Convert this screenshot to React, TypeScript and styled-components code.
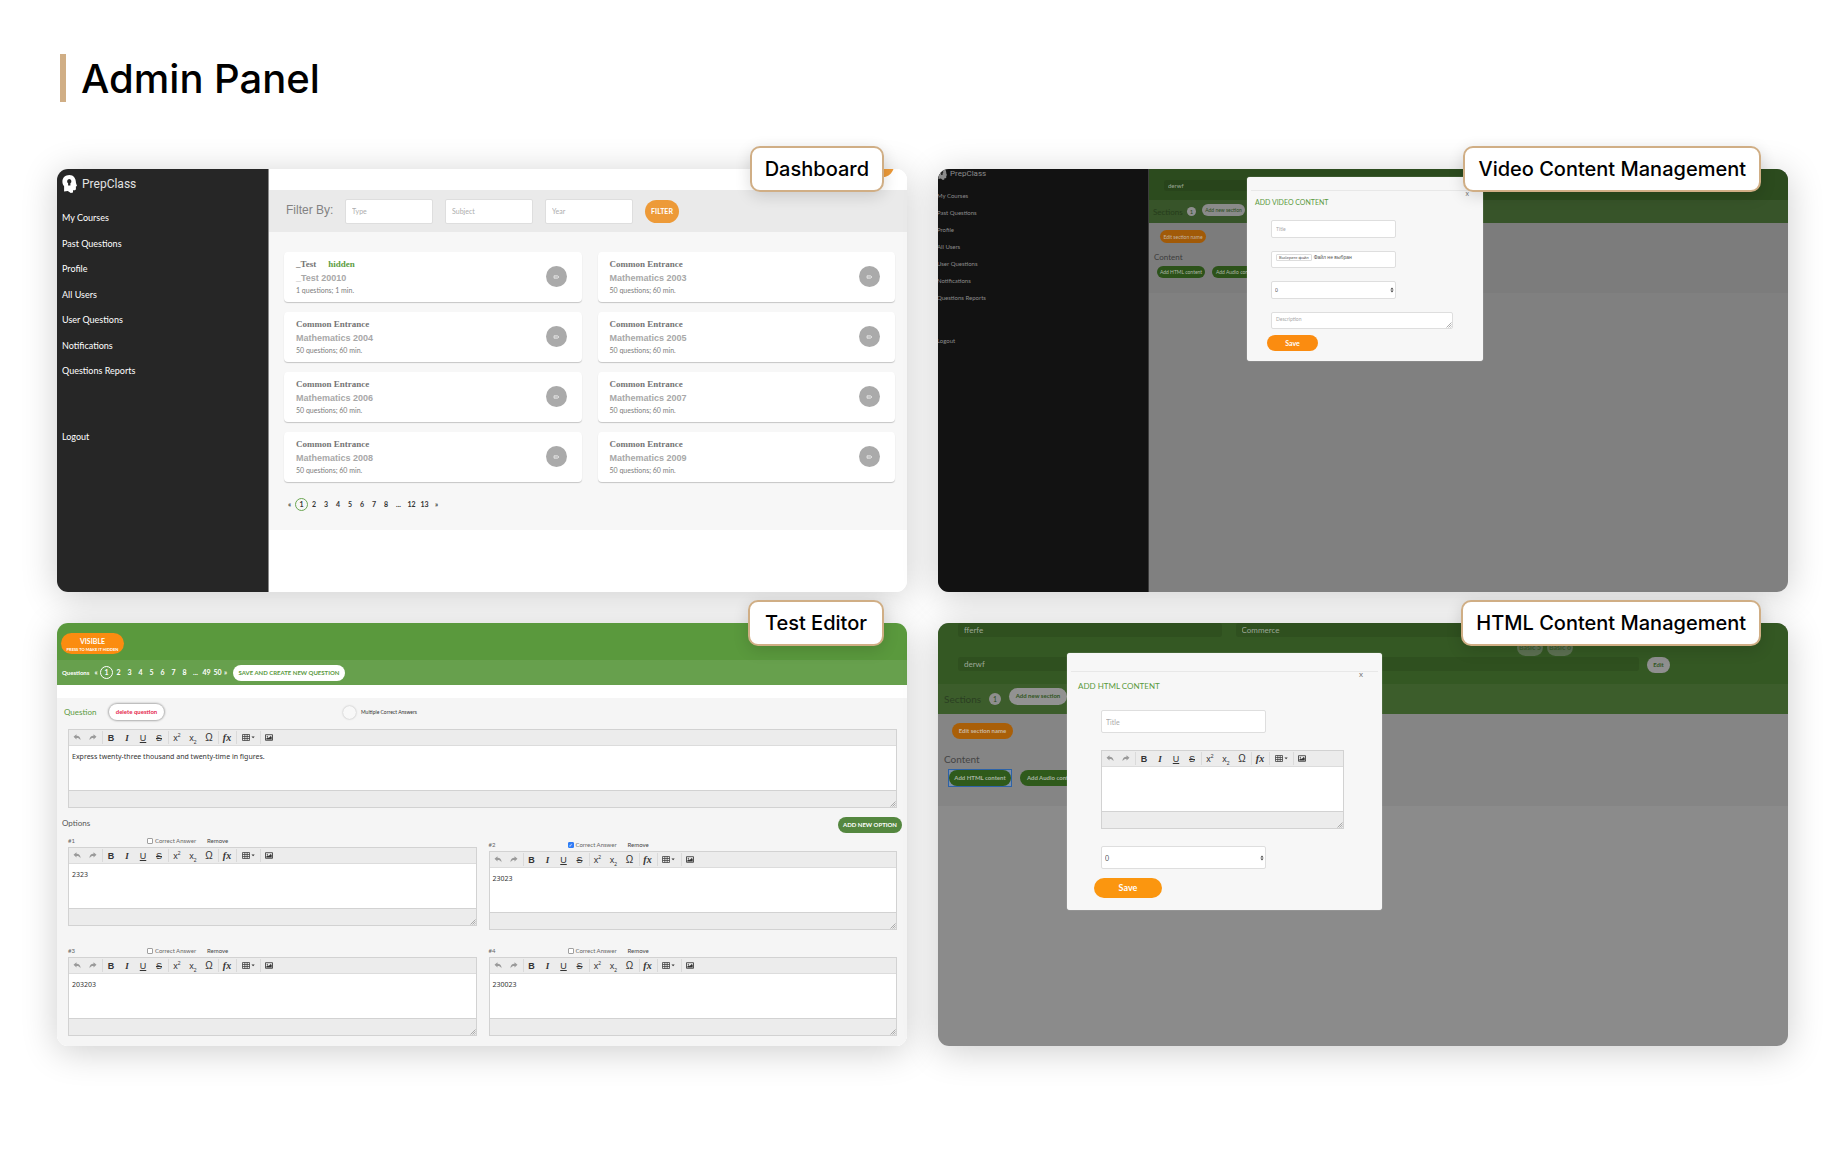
import React from "react";
import styled, { createGlobalStyle, css } from "styled-components";

const GlobalStyle = createGlobalStyle`
  *, *::before, *::after { box-sizing: border-box; }
  body { margin: 0; background: #fff; font-family: Inter, sans-serif; color: #000; }
  button, input, select, textarea { font-family: inherit; margin: 0; padding: 0; border: 0; border-radius: 0; }
  button { cursor: pointer; white-space: nowrap; }
  h1, h2, h3, p, ul { margin: 0; padding: 0; }
  ul { list-style: none; }
  a { color: inherit; text-decoration: none; }
`;

/* ---------- Page ---------- */

const Page = styled.main`
  padding: 54px 58px 113px 57px;
`;

const Title = styled.h1`
  height: 48px;
  margin: 0 0 67px 3px;
  padding-left: 15px;
  border-left: 6px solid #d0ae85;
  font-size: 40px;
  font-weight: 500;
  line-height: 50px;
`;

const Gallery = styled.div`
  display: grid;
  grid-template-columns: repeat(2, minmax(0, 1fr));
  gap: 31px;
`;

const Shot = styled.section`
  position: relative;
  display: flex;
  min-height: 423px;
  border-radius: 11px;
  box-shadow: 0 5px 36px rgba(0, 0, 0, 0.2);
`;

const Badge = styled.h2<{ $right: number; $pad: number }>`
  position: absolute;
  top: -23px;
  right: ${(p) => p.$right}px;
  padding: 9px ${(p) => p.$pad}px;
  border: 2px solid #d0ae85;
  border-radius: 10px;
  background: #fff;
  box-shadow: 0 4px 16px rgba(0, 0, 0, 0.14);
  font-size: 20px;
  font-weight: 500;
  line-height: 24px;
  white-space: nowrap;
`;

const Screen = styled.div<{ $bg: string; $column?: boolean }>`
  position: relative;
  display: flex;
  flex: 1;
  flex-direction: ${(p) => (p.$column ? "column" : "row")};
  min-width: 0;
  overflow: hidden;
  border-radius: 11px;
  background: ${(p) => p.$bg};
  font-family: Lato, sans-serif;
`;

const Column = styled.div`
  display: flex;
  flex: 1;
  flex-direction: column;
  min-width: 0;
`;

/* ---------- Sidebar ---------- */

const Side = styled.nav<{ $small?: boolean }>`
  display: flex;
  flex: none;
  flex-direction: column;
  width: 212px;
  padding: 5px 0 0 5px;
  background: #262626;
  color: #fff;
  border-right: 1px solid #8a8a8a;
  font-size: 9px;
  line-height: 12px;
  ${(p) =>
    p.$small &&
    css`
      width: 211px;
      padding: 0;
      background: #121212;
      color: #8c8c8c;
      border-right-color: #3c3c3c;
      font-size: 6px;
      line-height: 8px;
    `}
`;

const Logo = styled.div<{ $small?: boolean }>`
  display: flex;
  align-items: center;
  gap: ${(p) => (p.$small ? 3 : 5)}px;
  height: ${(p) => (p.$small ? 10 : 19)}px;
  margin-left: ${(p) => (p.$small ? -1 : 0)}px;
  font-family: Roboto, sans-serif;
  font-size: ${(p) => (p.$small ? 8 : 12)}px;
  font-weight: 400;
  color: ${(p) => (p.$small ? "#8c8c8c" : "#e2e2e2")};
  svg {
    width: ${(p) => (p.$small ? 10 : 15)}px;
    height: ${(p) => (p.$small ? 12 : 18)}px;
    color: ${(p) => (p.$small ? "#8c8c8c" : "#fff")};
  }
`;

const Menu = styled.ul<{ $small?: boolean }>`
  display: flex;
  flex-direction: column;
  justify-content: space-between;
  height: ${(p) => (p.$small ? 110 : 165)}px;
  margin: ${(p) => (p.$small ? "13px 0 35px -1px" : "19px 0 54px")};
`;

const Logout = styled.a<{ $small?: boolean }>`
  margin-left: ${(p) => (p.$small ? -1 : 0)}px;
`;

const HeadIcon = () => (
  <svg viewBox="0 0 15 18" aria-hidden="true">
    <path
      fill="currentColor"
      d="M7.400 0C3.300 0 .400 2.800.400 6.600c0 2 .700 3.500 1.700 4.700v5.200l3.700-.600 3 2.100 2.200-.600v-2.100h1.700c.800 0 1.200-.500 1.200-1.200v-2.500l1.100-.700-1-2.800C14 3.400 11.500 0 7.400 0z"
    />
    <path fill="#262626" d="M7.300 4a2.300 2.300 0 0 0-1.200 4.200v2.300h2.300V8.200A2.300 2.300 0 0 0 7.300 4z" />
  </svg>
);

const MENU = [
  "My Courses",
  "Past Questions",
  "Profile",
  "All Users",
  "User Questions",
  "Notifications",
  "Questions Reports",
];

const Sidebar = ({ small }: { small?: boolean }) => (
  <Side $small={small}>
    <Logo $small={small}>
      <HeadIcon />
      PrepClass
    </Logo>
    <Menu $small={small}>
      {MENU.map((m) => (
        <li key={m}>
          <a href="#">{m}</a>
        </li>
      ))}
    </Menu>
    <Logout href="#" $small={small}>
      Logout
    </Logout>
  </Side>
);

/* ---------- Shared controls ---------- */

const Pill = styled.button<{
  $bg: string;
  $fg?: string;
  $h?: number;
  $w: number;
  $size?: number;
  $light?: boolean;
}>`
  flex: none;
  width: ${(p) => p.$w}px;
  height: ${(p) => p.$h ?? 16}px;
  border-radius: 12px;
  background: ${(p) => p.$bg};
  color: ${(p) => p.$fg ?? "#fff"};
  font-size: ${(p) => p.$size ?? 6}px;
  font-weight: ${(p) => (p.$light ? 400 : 700)};
  line-height: 8px;
`;

type PagerLook = { $cell: number; $multi: number; $first: number; $last: number; $color: string; $ring: string };

const Pager = styled.ul<PagerLook>`
  display: flex;
  align-items: center;
  color: ${(p) => p.$color};
  font-size: 7px;
  font-weight: 700;
  line-height: 11px;
  text-align: center;
  li {
    width: ${(p) => p.$cell}px;
  }
  li:nth-child(n + 10) {
    width: ${(p) => p.$multi}px;
  }
  li:first-child {
    width: ${(p) => p.$first}px;
  }
  li:last-child {
    width: ${(p) => p.$last}px;
  }
  li[aria-current] {
    width: 13px;
    border: 1px solid ${(p) => p.$ring};
    border-radius: 50%;
  }
`;

const Pages = ({ items, ...look }: { items: string[] } & PagerLook) => (
  <Pager {...look}>
    {items.map((t) => (
      <li key={t} aria-current={t === "1" ? "page" : undefined}>
        {t}
      </li>
    ))}
  </Pager>
);

/* ---------- Dashboard ---------- */

const TopStrip = styled.header`
  display: flex;
  justify-content: flex-end;
  align-items: flex-end;
  height: 21px;
  padding: 0 13px 13px 0;
  background: #fff;
`;

const FilterBar = styled.form`
  display: flex;
  align-items: center;
  gap: 12px;
  height: 42px;
  padding: 0 17px;
  background: #eaeaea;
`;

const FilterLabel = styled.span`
  width: 47px;
  color: #828282;
  font-family: "Liberation Sans", sans-serif;
  font-size: 12px;
  line-height: 14px;
  padding-bottom: 3px;
  white-space: nowrap;
`;

const FilterInput = styled.input`
  width: 88px;
  height: 25px;
  padding: 0 6px;
  border: 1px solid #dedede;
  border-radius: 2px;
  background: #fff;
  font-size: 7px;
  &::placeholder { color: #adadad; }
`;

const TestArea = styled.div`
  height: 298px;
  padding: 20px 12px 0 15px;
  background: #f7f7f7;
`;

const TestGrid = styled.div`
  display: grid;
  grid-template-columns: 1fr 1fr;
  gap: 10px 16px;
  margin-bottom: 16px;
`;

const TestCard = styled.article`
  display: flex;
  align-items: center;
  justify-content: space-between;
  height: 50px;
  padding: 0 15px 1px 12px;
  border-radius: 4px;
  background: #fff;
  box-shadow: 0 1px 1px rgba(0, 0, 0, 0.2);
`;

const Exam = styled.h3`
  color: #757575;
  font: 700 9px/14px "Liberation Serif", serif;
`;

const Hidden = styled.span`
  margin-left: 12px;
  color: #5d9d42;
`;

const Subject = styled.p`
  color: #a8a8a8;
  font: 700 9px/14px "Liberation Sans", sans-serif;
`;

const Meta = styled.p`
  color: #7c7c7c;
  font-size: 7px;
  line-height: 11px;
`;

const EditButton = styled.button`
  display: grid;
  place-items: center;
  width: 21px;
  height: 21px;
  border-radius: 50%;
  background: #aaa;
`;

const Pencil = () => (
  <svg width="7" height="4" viewBox="0 0 7 4" aria-hidden="true">
    <path d="M1 .800h3.500L6 2 4.500 3.200H1z" fill="#bdbdbd" stroke="#f0f0f0" strokeWidth=".7" />
  </svg>
);

const TESTS = [
  ["_Test", "_Test 20010", "1 questions; 1 min."],
  ...[2003, 2004, 2005, 2006, 2007, 2008, 2009].map((y) => [
    "Common Entrance",
    `Mathematics ${y}`,
    "50 questions; 60 min.",
  ]),
];

const Dashboard = () => (
  <Screen $bg="#fff">
    <Sidebar />
    <Column>
      <TopStrip>
        <Pill $bg="#ed9a38" $w={64} $h={23} aria-label="Create" />
      </TopStrip>
      <FilterBar>
        <FilterLabel>Filter By:</FilterLabel>
        {["Type", "Subject", "Year"].map((f) => (
          <FilterInput key={f} placeholder={f} aria-label={f} />
        ))}
        <Pill type="button" $bg="#ed9a38" $w={34} $h={23} $size={7}>
          FILTER
        </Pill>
      </FilterBar>
      <TestArea>
        <TestGrid>
          {TESTS.map(([exam, subject, meta], i) => (
            <TestCard key={subject}>
              <div>
                <Exam>
                  {exam}
                  {i === 0 && <Hidden>hidden</Hidden>}
                </Exam>
                <Subject>{subject}</Subject>
                <Meta>{meta}</Meta>
              </div>
              <EditButton aria-label={`Edit ${subject}`}>
                <Pencil />
              </EditButton>
            </TestCard>
          ))}
        </TestGrid>
        <Pages
          $cell={12}
          $multi={13}
          $first={11}
          $last={11}
          $color="#333"
          $ring="#6aa551"
          items={["«", "1", "2", "3", "4", "5", "6", "7", "8", "...", "12", "13", "»"]}
        />
      </TestArea>
    </Column>
  </Screen>
);

/* ---------- Rich text editor ---------- */

const EditorBox = styled.div`
  display: flex;
  flex-direction: column;
  height: 79px;
  border: 1px solid #d2d2d2;
  background: #ececec;
`;

const Tools = styled.div`
  display: flex;
  align-items: center;
  height: 16px;
  border-bottom: 1px solid #dcdcdc;
`;

const ToolGroup = styled.div`
  display: flex;
  align-items: center;
  height: 13px;
  padding-right: 1px;
  & + & {
    border-left: 1px solid #dadada;
  }
`;

const Tool = styled.button<{ $wide?: boolean; $face?: string }>`
  display: flex;
  align-items: center;
  justify-content: center;
  width: ${(p) => (p.$wide ? 22 : 16)}px;
  height: 13px;
  background: none;
  color: #333;
  font: ${(p) => p.$face ?? '400 9px/12px "Liberation Sans", sans-serif'};
  sup, sub { font-size: 5px; line-height: 0; }
`;

const EditorText = styled.textarea`
  flex: 1;
  padding: 6px 3px;
  resize: none;
  background: #fff;
  color: #333;
  font: 400 7px/9px "Noto Sans", sans-serif;
  outline: none;
`;

const Status = styled.div`
  display: flex;
  align-items: flex-end;
  justify-content: flex-end;
  height: 17px;
  border-top: 1px solid #d2d2d2;
`;

const Grip = () => (
  <svg width="6" height="6" viewBox="0 0 6 6" aria-hidden="true">
    <path d="M.5 5.500l5-5M2.500 5.500l3-3M4.500 5.500l1-1" stroke="#999" strokeWidth=".8" />
  </svg>
);

const UNDO = "M.5 2.800L3.500.3v1.500C6.300 1.800 7.500 3.400 7.500 6.300 6.500 4.600 5.500 4 3.500 4v1.500z";
const REDO = "M7.500 2.800L4.500.3v1.500C1.700 1.800.5 3.400.5 6.300 1.500 4.600 2.500 4 4.500 4v1.500z";

const Arrow = ({ d }: { d: string }) => (
  <svg width="8" height="7" viewBox="0 0 8 7" aria-hidden="true">
    <path d={d} fill="#9a9a9a" />
  </svg>
);

const TableIcon = () => (
  <svg width="13" height="7" viewBox="0 0 13 7" aria-hidden="true">
    <path d="M.5.500h7v6h-7zM.5 2.500h7M.5 4.500h7M2.800.500v6M5.200.500v6" fill="none" stroke="#444" strokeWidth=".8" />
    <path d="M9.500 2.600h3.200L11.100 4.300z" fill="#333" />
  </svg>
);

const ImageIcon = () => (
  <svg width="8" height="7" viewBox="0 0 8 7" aria-hidden="true">
    <path d="M.5.700h7v5.600h-7z" fill="none" stroke="#444" strokeWidth=".9" />
    <path d="M1.300 5.500V4.600l1.400-1.300 1 .8L5.700 2l1 1v2.500z" fill="#333" />
    <circle cx="2.300" cy="2.300" r=".6" fill="#333" />
  </svg>
);

const Editor = ({ label, text = "" }: { label: string; text?: string }) => (
  <EditorBox>
    <Tools>
      <ToolGroup>
        <Tool type="button" aria-label="Undo"><Arrow d={UNDO} /></Tool>
        <Tool type="button" aria-label="Redo"><Arrow d={REDO} /></Tool>
      </ToolGroup>
      <ToolGroup>
        <Tool type="button" $face='700 9px/12px "Liberation Sans", sans-serif'>B</Tool>
        <Tool type="button" $face='italic 700 9px/12px "Liberation Serif", serif'>I</Tool>
        <Tool type="button"><u>U</u></Tool>
        <Tool type="button"><s>S</s></Tool>
      </ToolGroup>
      <ToolGroup>
        <Tool type="button"><span>x<sup>2</sup></span></Tool>
        <Tool type="button"><span>x<sub>2</sub></span></Tool>
        <Tool type="button" $face='400 10px/12px "Liberation Sans", sans-serif'>Ω</Tool>
      </ToolGroup>
      <ToolGroup>
        <Tool type="button" $face='italic 700 10px/12px "Liberation Serif", serif'>fx</Tool>
      </ToolGroup>
      <ToolGroup>
        <Tool type="button" $wide aria-label="Table"><TableIcon /></Tool>
      </ToolGroup>
      <ToolGroup>
        <Tool type="button" aria-label="Image"><ImageIcon /></Tool>
      </ToolGroup>
    </Tools>
    <EditorText aria-label={label} defaultValue={text} />
    <Status><Grip /></Status>
  </EditorBox>
);

/* ---------- Test editor ---------- */

const VisibleBar = styled.header`
  display: flex;
  align-items: flex-end;
  height: 37px;
  padding: 0 4px 6px;
  background: #5a993d;
`;

const VisibleButton = styled.button`
  width: 63px;
  height: 21px;
  padding-top: 2px;
  border-radius: 11px;
  background: #fb8c10;
  color: #fff;
  font-size: 7px;
  font-weight: 700;
  line-height: 9px;
  small {
    display: block;
    font-size: 4px;
    line-height: 7px;
  }
`;

const QuestionsBar = styled.div`
  display: flex;
  align-items: center;
  height: 25px;
  padding: 0 5px;
  margin-bottom: 13px;
  background: #67a04d;
  color: #fff;
  font-size: 6px;
  font-weight: 700;
  ul { margin: 0 5px 0 2px; }
`;

const BarName = styled.span`
  width: 28px;
`;

const EditorArea = styled.div`
  flex: 1;
  padding: 0 5px;
  background: #f5f5f5;
`;

const QuestionHead = styled.div`
  display: grid;
  grid-template-columns: 45px 56px 1fr;
  align-items: center;
  height: 31px;
  padding: 0 2px 3px;
  color: #5a993d;
  font-size: 8px;
`;

const DeleteButton = styled(Pill)`
  box-shadow: 0 0 2px 1px rgba(0, 0, 0, 0.3);
`;

const Multi = styled.label`
  display: flex;
  align-items: center;
  gap: 5px;
  margin-left: 178px;
  color: #333;
  font-size: 5px;
  input {
    appearance: none;
    width: 13px;
    height: 13px;
    border-radius: 50%;
    background: #f8f8f8;
    box-shadow: 0 0 2px rgba(0, 0, 0, 0.3);
  }
`;

const Inset = styled.div`
  padding: 0 5px 0 6px;
`;

const OptionsHead = styled.div`
  display: flex;
  justify-content: space-between;
  height: 16px;
  margin-top: 9px;
  color: #555;
  font-size: 8px;
  line-height: 12px;
`;

const Options = styled.div`
  display: grid;
  grid-template-columns: 1fr 1fr;
  gap: 16px 12px;
  align-items: end;
  padding: 3px 5px 0 6px;
`;

const Option = styled.div<{ $raised?: boolean }>`
  min-width: 0;
  margin-bottom: ${(p) => (p.$raised ? 4 : 0)}px;
`;

const OptionHead = styled.div`
  display: grid;
  grid-template-columns: 79px 60px auto;
  align-items: center;
  justify-content: start;
  height: 11px;
  padding-bottom: 2px;
  color: #666;
  font-size: 6px;
  line-height: 8px;
  label { display: flex; align-items: center; gap: 2px; white-space: nowrap; }
`;

const Tick = styled.input`
  appearance: none;
  display: grid;
  place-items: center;
  width: 6px;
  height: 6px;
  border: 1px solid #a0a0a0;
  border-radius: 1px;
  background: #fff;
  &:checked {
    border-color: #2f7cf6;
    background: #2f7cf6;
  }
  &:checked::after {
    content: "✓";
    color: #fff;
    font: 700 5px/5px "DejaVu Sans", sans-serif;
  }
`;

const TextButton = styled.button`
  background: none;
  color: #444;
  font-size: 6px;
  line-height: 8px;
`;

const OPTIONS = ["2323", "23023", "203203", "230023"];

const TestEditor = () => (
  <Screen $bg="#fff" $column>
    <VisibleBar>
      <VisibleButton>
        VISIBLE
        <small>PRESS TO MAKE IT HIDDEN</small>
      </VisibleButton>
    </VisibleBar>
    <QuestionsBar>
      <BarName>Questions</BarName>
      <Pages
        $cell={11}
        $multi={11}
        $first={8}
        $last={5}
        $color="#fff"
        $ring="#fff"
        items={["«", "1", "2", "3", "4", "5", "6", "7", "8", "...", "49", "50", "»"]}
      />
      <Pill $bg="#fff" $fg="#5a993d" $w={112}>
        SAVE AND CREATE NEW QUESTION
      </Pill>
    </QuestionsBar>
    <EditorArea>
      <QuestionHead>
        Question
        <DeleteButton $bg="#fff" $fg="#e5254b" $w={55}>
          delete question
        </DeleteButton>
        <Multi>
          <input type="checkbox" />
          Multiple Correct Answers
        </Multi>
      </QuestionHead>
      <Inset>
        <Editor label="Question text" text="Express twenty-three thousand and twenty-time in figures." />
      </Inset>
      <OptionsHead>
        Options
        <Pill $bg="#54873f" $w={64}>
          ADD NEW OPTION
        </Pill>
      </OptionsHead>
      <Options>
        {OPTIONS.map((o, i) => (
          <Option key={o} $raised={i === 0}>
            <OptionHead>
              <span>#{i + 1}</span>
              <label>
                <Tick type="checkbox" defaultChecked={i === 1} />
                Correct Answer
              </label>
              <TextButton>Remove</TextButton>
            </OptionHead>
            <Editor label={`Option ${i + 1}`} text={o} />
          </Option>
        ))}
      </Options>
    </EditorArea>
  </Screen>
);

/* ---------- Modal ---------- */

const Dialog = styled.form<{ $left: number; $top: number; $w: number; $h: number; $small?: boolean }>`
  position: absolute;
  left: ${(p) => p.$left}px;
  top: ${(p) => p.$top}px;
  display: flex;
  flex-direction: column;
  align-items: flex-start;
  width: ${(p) => p.$w}px;
  height: ${(p) => p.$h}px;
  padding: ${(p) => (p.$small ? "13px 4px 0" : "18px 4px 0")};
  border-radius: 3px;
  background: #f7f7f7;
  box-shadow: 0 0 1px rgba(255, 255, 255, 0.8);
`;

const DialogHead = styled.div<{ $small?: boolean }>`
  position: relative;
  width: 100%;
  height: ${(p) => (p.$small ? 30 : 39)}px;
  padding: ${(p) => (p.$small ? "7px 4px" : "9px 7px")};
  border-top: 1px solid #e8e8e8;
  color: #5a9a3e;
  font-size: ${(p) => (p.$small ? 7 : 8)}px;
  line-height: ${(p) => (p.$small ? 9 : 11)}px;
`;

const DialogTitle = styled.h3`
  font: inherit;
`;

const Close = styled.button<{ $small?: boolean }>`
  position: absolute;
  top: -1px;
  right: ${(p) => (p.$small ? 10 : 15)}px;
  background: none;
  color: #777;
  font-size: ${(p) => (p.$small ? 7 : 8)}px;
  line-height: 6px;
`;

const Fields = styled.div<{ $small?: boolean }>`
  display: flex;
  flex-direction: column;
  gap: ${(p) => (p.$small ? 13 : 17)}px;
  width: 100%;
  padding: ${(p) => (p.$small ? "0 26px 0 20px" : "0 34px 0 30px")};
  margin-bottom: ${(p) => (p.$small ? 6 : 9)}px;
`;

const box = css<{ $small?: boolean }>`
  width: ${(p) => (p.$small ? 125 : 165)}px;
  height: ${(p) => (p.$small ? 18 : 23)}px;
  padding: 0 4px;
  border: 1px solid #dedede;
  border-radius: 2px;
  background: #fff;
  font-size: ${(p) => (p.$small ? 5 : 7)}px;
  color: #555;
  outline: none;
  &::placeholder { color: #aaa; }
`;

const Box = styled.input<{ $small?: boolean }>`
  ${box}
`;

const SelectWrap = styled.div<{ $small?: boolean }>`
  position: relative;
  width: ${(p) => (p.$small ? 125 : 165)}px;
  display: flex;
  svg { position: absolute; right: 2px; top: 50%; margin-top: -3px; }
`;

const Select = styled.select<{ $small?: boolean }>`
  ${box}
  appearance: none;
  padding: 0 3px;
`;

const FileBox = styled.label<{ $small?: boolean }>`
  ${box}
  display: flex;
  gap: 2px;
  height: 17px;
  padding-top: 2px;
  line-height: 6px;
  white-space: nowrap;
  font-family: "Liberation Sans", sans-serif;
  input { width: 0; height: 0; opacity: 0; position: absolute; }
`;

const FileButton = styled.span`
  height: 7px;
  padding: 0 2px;
  border: 1px solid #ddd;
  border-radius: 1px;
  font-size: 4px;
  line-height: 5px;
`;

const AreaWrap = styled.div`
  position: relative;
  display: flex;
  width: 182px;
  svg { position: absolute; right: 1px; bottom: 1px; }
`;

const Area = styled.textarea<{ $small?: boolean }>`
  ${box}
  flex: 1;
  height: 17px;
  padding: 3px 4px;
  line-height: 6px;
  resize: none;
`;

const SaveRow = styled.div<{ $small?: boolean }>`
  display: flex;
  padding-left: ${(p) => (p.$small ? 16 : 23)}px;
`;

const Spinner = () => (
  <svg width="4" height="6" viewBox="0 0 4 6" aria-hidden="true">
    <path d="M.4 2.500L2 .4l1.600 2.100zM.4 3.500L2 5.600l1.600-2.100z" fill="#444" />
  </svg>
);

const NumberSelect = ({ small }: { small?: boolean }) => (
  <SelectWrap $small={small}>
    <Select $small={small} aria-label="Order">
      <option>0</option>
    </Select>
    <Spinner />
  </SelectWrap>
);

/* ---------- Dimmed course page behind the modals ---------- */

const Band = styled.div<{ $h: number; $bg: string; $pad?: string; $align?: string }>`
  display: flex;
  flex: none;
  align-items: ${(p) => p.$align ?? "center"};
  height: ${(p) => p.$h}px;
  padding: ${(p) => p.$pad ?? "0"};
  background: ${(p) => p.$bg};
`;

const DimField = styled.input<{ $bg: string; $small?: boolean }>`
  flex: 1;
  min-width: 0;
  height: ${(p) => (p.$small ? 11 : 14)}px;
  padding: 0 ${(p) => (p.$small ? 4 : 6)}px;
  border-radius: 3px;
  background: ${(p) => p.$bg};
  color: #9da898;
  font-size: ${(p) => (p.$small ? 6 : 8)}px;
`;

const FieldRow = styled.div<{ $gap: number }>`
  display: flex;
  gap: ${(p) => p.$gap}px;
  width: 100%;
`;

const DimTitle = styled.h3<{ $small?: boolean; $w?: number; $tone: string }>`
  width: ${(p) => (p.$w ? `${p.$w}px` : "auto")};
  color: ${(p) => p.$tone};
  font-size: ${(p) => (p.$small ? 8 : 10)}px;
  font-weight: 400;
  line-height: ${(p) => (p.$small ? 10 : 12)}px;
`;

const Count = styled.span<{ $small?: boolean }>`
  width: ${(p) => (p.$small ? 9 : 12)}px;
  height: ${(p) => (p.$small ? 9 : 12)}px;
  margin-right: ${(p) => (p.$small ? 6 : 8)}px;
  border-radius: 50%;
  background: #8e8e8e;
  color: #2b4d1c;
  font-size: ${(p) => (p.$small ? 6 : 7)}px;
  line-height: ${(p) => (p.$small ? 9 : 12)}px;
  text-align: center;
`;

const Lift = styled.div<{ $h: number }>`
  display: flex;
  align-items: flex-start;
  height: ${(p) => p.$h}px;
`;

const DimBody = styled.div<{ $small?: boolean }>`
  display: flex;
  flex-direction: column;
  align-items: flex-start;
  height: ${(p) => (p.$small ? 70 : 92)}px;
  padding: ${(p) => (p.$small ? "7px 5px" : "9px 6px")};
  background: ${(p) => (p.$small ? "#7c7c7c" : "#858585")};
  > button { margin-left: ${(p) => (p.$small ? 6 : 8)}px; }
  > h3 { margin: ${(p) => (p.$small ? "9px 0 4px" : "14px 0 5px")}; }
`;

const ContentButtons = styled.div<{ $small?: boolean }>`
  display: flex;
  gap: ${(p) => (p.$small ? 7 : 8)}px;
  padding-left: ${(p) => (p.$small ? 3 : 4)}px;
`;

const FocusRing = styled.span`
  display: flex;
  border: 1px solid #2c62a8;
  background: #7d8fa8;
  margin: -1px 0;
`;

const BasicRow = styled.div`
  display: flex;
  gap: 4px;
  height: 19px;
  padding-left: 579px;
`;

const VideoContent = () => (
  <Screen $bg="#808080">
    <Sidebar small />
    <Column>
      <Band $h={31} $bg="#2c4b1e" $pad="11px 290px 0 15px" $align="flex-start">
        <DimField $small $bg="#28441b" aria-label="Course name" defaultValue="derwf" />
      </Band>
      <Band $h={23} $bg="#375429" $pad="0 5px 0 4px">
        <DimTitle $small $w={34} $tone="#263c1b">Sections</DimTitle>
        <Count $small>1</Count>
        <Lift $h={16}>
          <Pill $bg="#8a8a8a" $fg="#2b4d1c" $h={12} $w={43} $size={5} $light>
            Add new section
          </Pill>
        </Lift>
      </Band>
      <DimBody $small>
        <Pill $bg="#a15a08" $fg="#c4b5a2" $h={13} $w={46} $size={5} $light>
          Edit section name
        </Pill>
        <DimTitle $small $tone="#3c3c3c">Content</DimTitle>
        <ContentButtons $small>
          <Pill $bg="#2c5219" $fg="#adb7a8" $h={12} $w={48} $size={5} $light>
            Add HTML content
          </Pill>
          <Pill $bg="#2c5219" $fg="#adb7a8" $h={12} $w={49} $size={5} $light>
            Add Audio content
          </Pill>
        </ContentButtons>
      </DimBody>
    </Column>
    <Dialog $left={309} $top={8} $w={236} $h={184} $small>
      <DialogHead $small>
        <DialogTitle>ADD VIDEO CONTENT</DialogTitle>
        <Close type="button" aria-label="Close" $small>x</Close>
      </DialogHead>
      <Fields $small>
        <Box $small placeholder="Title" aria-label="Title" />
        <FileBox $small>
          <FileButton>Выберите файл</FileButton>
          Файл не выбран
          <input type="file" />
        </FileBox>
        <NumberSelect small />
        <AreaWrap>
          <Area $small placeholder="Description" aria-label="Description" />
          <Grip />
        </AreaWrap>
      </Fields>
      <SaveRow $small>
        <Pill type="button" $bg="#fb8c10" $w={51} $size={7}>
          Save
        </Pill>
      </SaveRow>
    </Dialog>
  </Screen>
);

const HtmlContent = () => (
  <Screen $bg="#8b8b8b" $column>
    <Band $h={16} $bg="#345823" $pad="0 289px 0 20px" $align="flex-start">
      <FieldRow $gap={14}>
        <DimField $bg="#2f501f" aria-label="Course" defaultValue="fferfe" />
        <DimField $bg="#2f501f" aria-label="Subject" defaultValue="Commerce" />
      </FieldRow>
    </Band>
    <Band $h={18} $bg="#345823">
      <BasicRow>
        {["Basic 5", "Basic 6"].map((b) => (
          <Pill key={b} $bg="#5c7052" $fg="#3a5a2c" $w={26} $h={17} $size={7}>
            {b}
          </Pill>
        ))}
      </BasicRow>
    </Band>
    <Band $h={27} $bg="#345823" $pad="0 118px 11px 20px">
      <FieldRow $gap={8}>
        <DimField $bg="#2f501f" aria-label="Description" defaultValue="derwf" />
        <Pill $bg="#8f8f8f" $fg="#2f5520" $w={23}>
          Edit
        </Pill>
      </FieldRow>
    </Band>
    <Band $h={30} $bg="#3c5d2b" $pad="0 6px">
      <DimTitle $w={45} $tone="#2b3f22">Sections</DimTitle>
      <Count>1</Count>
      <Lift $h={23}>
        <Pill $bg="#929292" $fg="#2f5520" $w={58} $h={17}>
          Add new section
        </Pill>
      </Lift>
    </Band>
    <DimBody>
      <Pill $bg="#a95f08" $fg="#c9b9a4" $w={61}>
        Edit section name
      </Pill>
      <DimTitle $tone="#444">Content</DimTitle>
      <ContentButtons>
        <FocusRing>
          <Pill $bg="#2f5a1b" $fg="#aab5a4" $w={62}>
            Add HTML content
          </Pill>
        </FocusRing>
        <Pill $bg="#2f5a1b" $fg="#aab5a4" $w={64}>
          Add Audio content
        </Pill>
      </ContentButtons>
    </DimBody>
    <Dialog $left={129} $top={30} $w={315} $h={257}>
      <DialogHead>
        <DialogTitle>ADD HTML CONTENT</DialogTitle>
        <Close type="button" aria-label="Close">x</Close>
      </DialogHead>
      <Fields>
        <Box placeholder="Title" aria-label="Title" />
        <Editor label="Content" />
        <NumberSelect />
      </Fields>
      <SaveRow>
        <Pill type="button" $bg="#fb960f" $w={68} $h={20} $size={9}>
          Save
        </Pill>
      </SaveRow>
    </Dialog>
  </Screen>
);

const SHOTS = [
  { name: "Dashboard", right: 23, pad: 13, view: <Dashboard /> },
  { name: "Video Content Management", right: 27, pad: 13, view: <VideoContent /> },
  { name: "Test Editor", right: 23, pad: 15, view: <TestEditor /> },
  { name: "HTML Content Management", right: 27, pad: 13, view: <HtmlContent /> },
];

export default function App() {
  return (
    <>
      <GlobalStyle />
      <Page>
        <Title>Admin Panel</Title>
        <Gallery>
          {SHOTS.map((s) => (
            <Shot key={s.name}>
              {s.view}
              <Badge $right={s.right} $pad={s.pad}>{s.name}</Badge>
            </Shot>
          ))}
        </Gallery>
      </Page>
    </>
  );
}
